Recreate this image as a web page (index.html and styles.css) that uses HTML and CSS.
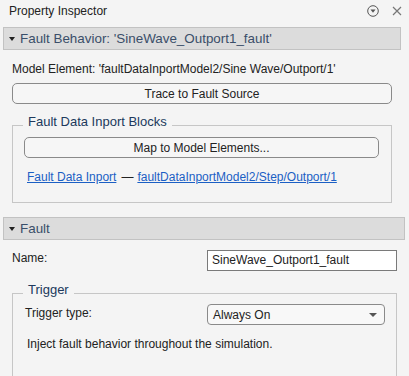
FILE: index.html
```html
<!DOCTYPE html>
<html lang="en">
<head>
    <meta charset="UTF-8">
    <meta name="viewport" content="width=device-width, initial-scale=1.0">
    <title>Property Inspector</title>
    <link rel="stylesheet" href="styles.css">
</head>
<body>
    <div class="inspector">
        <div class="titlebar">
            <span class="titlebar-text">Property Inspector</span>
            <div class="titlebar-icons">
                <svg class="icon-menu" width="12" height="12" viewBox="0 0 12 12">
                    <circle cx="6" cy="6" r="5.3" fill="none" stroke="#555" stroke-width="1"/>
                    <polygon points="3.5,4.5 8.5,4.5 6,7.8" fill="#555"/>
                </svg>
                <svg class="icon-close" width="10" height="10" viewBox="0 0 10 10">
                    <path d="M1 1 L9 9 M9 1 L1 9" stroke="#777" stroke-width="1.2"/>
                </svg>
            </div>
        </div>

        <div class="section section-behavior">
            <div class="section-header"><span class="caret"></span>Fault Behavior: 'SineWave_Outport1_fault'</div>
            <div class="section-body">
                <div class="text-row">Model Element: 'faultDataInportModel2/Sine Wave/Outport/1'</div>
                <button class="btn">Trace to Fault Source</button>

                <div class="group group-blocks">
                    <span class="group-title">Fault Data Inport Blocks</span>
                    <button class="btn btn-map">Map to Model Elements...</button>
                    <div class="links">
                        <a href="#">Fault Data Inport</a><span class="dash">—</span><a href="#">faultDataInportModel2/Step/Outport/1</a>
                    </div>
                </div>
            </div>
        </div>

        <div class="section section-fault">
            <div class="section-header"><span class="caret"></span>Fault</div>
            <div class="section-body">
                <div class="form-row name-row">
                    <label class="form-label">Name:</label>
                    <div class="text-input">SineWave_Outport1_fault</div>
                </div>

                <div class="group group-trigger">
                    <span class="group-title">Trigger</span>
                    <div class="form-row trigger-row">
                        <label class="form-label">Trigger type:</label>
                        <div class="dropdown">
                            <span>Always On</span>
                            <span class="dropdown-arrow"></span>
                        </div>
                    </div>
                    <div class="text-row hint">Inject fault behavior throughout the simulation.</div>
                </div>
            </div>
        </div>
    </div>
</body>
</html>
```

FILE: styles.css
```css
html, body {
    overflow: hidden;
}

body {
    margin: 0;
    padding: 0;
    background-color: #f4f4f4;
    font-family: "Liberation Sans", Arial, sans-serif;
    font-size: 12px;
    color: #222;
}

.inspector {
    width: 409px;
}

/* title bar */
.titlebar {
    height: 22px;
    display: flex;
    align-items: center;
    justify-content: space-between;
    padding: 0 7px 0 9px;
}

.titlebar-text {
    color: #222;
}

.titlebar-icons {
    display: flex;
    align-items: center;
    gap: 13px;
}

/* collapsible sections */
.section-header {
    height: 21px;
    margin: 5px 8px 0 3px;
    padding-left: 5px;
    display: flex;
    align-items: center;
    background-color: #dcdcdc;
    border: 1px solid #c2c2c2;
    font-size: 13.4px;
    color: #3a4e69;
}

.section-fault .section-header {
    margin: 14px 4px 0 3px;
}

.caret {
    width: 0;
    height: 0;
    margin-right: 5px;
    border-left: 3.5px solid transparent;
    border-right: 3.5px solid transparent;
    border-top: 4px solid #222;
}

.section-behavior .section-body {
    padding: 12px 17px 0 12px;
}

.section-fault .section-body {
    padding: 10px 12px 0 12px;
}

.text-row {
    line-height: 14px;
}

.btn {
    display: block;
    width: 100%;
    height: 21px;
    margin-top: 7px;
    padding: 0;
    background-color: #f6f6f6;
    border: 1px solid #8a8a8a;
    border-radius: 5px;
    font-family: inherit;
    font-size: 12px;
    color: #222;
}

/* group boxes */
.group {
    position: relative;
    border: 1px solid #c6c6c6;
}

.group-title {
    position: absolute;
    top: -12px;
    left: 10px;
    padding: 0 5px;
    line-height: 16px;
    font-size: 13px;
    color: #20395c;
    background-color: #f4f4f4;
}

.group-blocks {
    margin-top: 21px;
    padding: 11px 12px 18px 11px;
}

.group-blocks .btn-map {
    margin-top: 0;
}

.links {
    margin-top: 12px;
    padding-left: 3px;
    line-height: 14px;
}

.links a {
    color: #1b5fc4;
}

.dash {
    margin: 0 4px 0 5px;
}

/* form rows */
.form-row {
    display: grid;
    align-items: start;
}

.form-label {
    margin-top: 1px;
    line-height: 14px;
}

.name-row {
    grid-template-columns: 195px 1fr;
}

.text-input {
    height: 19px;
    padding-left: 4px;
    line-height: 19px;
    background-color: #fff;
    border: 1px solid #7a7a7a;
    font-size: 12px;
}

.group-trigger {
    margin-top: 22px;
    padding: 10px 11px 30px 12px;
}

.trigger-row {
    grid-template-columns: 182px 1fr;
}

.trigger-row .form-label {
    margin-top: 2px;
}

.dropdown {
    height: 19px;
    padding: 0 7px 0 5px;
    display: flex;
    align-items: center;
    justify-content: space-between;
    background-color: #f8f8f8;
    border: 1px solid #8a8a8a;
    border-radius: 4px;
    font-size: 12px;
}

.dropdown-arrow {
    width: 0;
    height: 0;
    border-left: 4px solid transparent;
    border-right: 4px solid transparent;
    border-top: 4px solid #555;
}

.hint {
    margin-top: 12px;
    padding-left: 2px;
}
```
